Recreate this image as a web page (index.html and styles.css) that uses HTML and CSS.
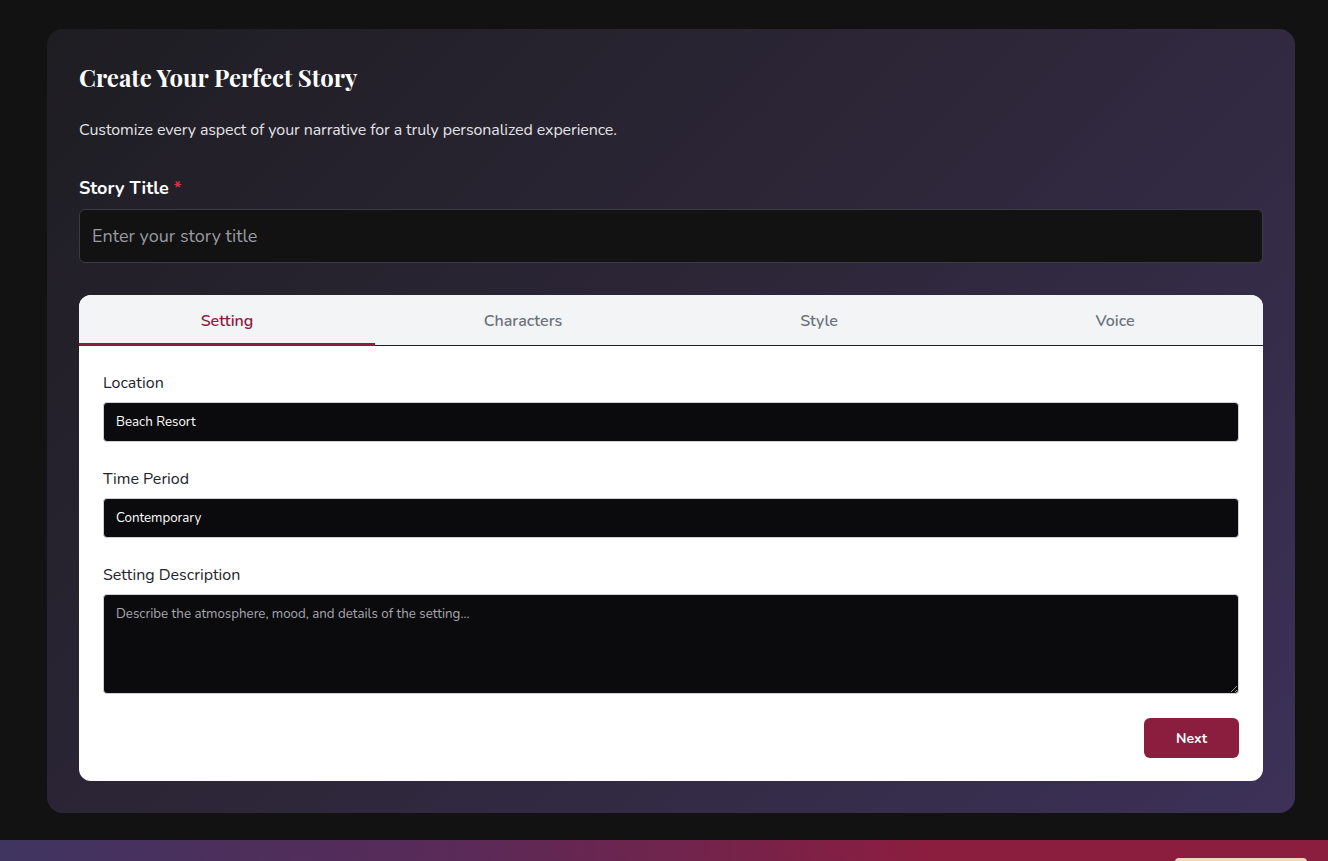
FILE: index.html
```html
<!DOCTYPE html>
<html lang="en">
<head>
<meta charset="utf-8">
<title>Create Your Perfect Story</title>
<link rel="stylesheet" href="styles.css">
</head>
<body>
<main class="page">
  <section class="panel">
    <h1 class="title">Create Your Perfect Story</h1>
    <p class="subtitle">Customize every aspect of your narrative for a truly personalized experience.</p>
    <label class="big-label" for="story-title">Story Title <span class="req">*</span></label>
    <input id="story-title" class="big-input" type="text" placeholder="Enter your story title">

    <div class="tabs-card">
      <div class="tabs">
        <div class="tab active">Setting</div>
        <div class="tab">Characters</div>
        <div class="tab">Style</div>
        <div class="tab">Voice</div>
      </div>
      <div class="tab-body">
        <div class="field">
          <label class="label" for="loc">Location</label>
          <input id="loc" class="input" type="text" value="Beach Resort">
        </div>
        <div class="field">
          <label class="label" for="time">Time Period</label>
          <input id="time" class="input" type="text" value="Contemporary">
        </div>
        <div class="field">
          <label class="label" for="desc">Setting Description</label>
          <textarea id="desc" class="textarea" placeholder="Describe the atmosphere, mood, and details of the setting..."></textarea>
        </div>
        <div class="actions">
          <button class="next" type="button">Next</button>
        </div>
      </div>
    </div>
  </section>
</main>
<footer class="strip">
  <div class="strip-btn"></div>
</footer>
</body>
</html>
```
FILE: styles.css
```css
* { box-sizing: border-box; }
html, body { margin: 0; padding: 0; }
body {
  background: #121212;
  font-family: "Nunito", "Open Sans", "Noto Sans", sans-serif;
  color: #fff;
  overflow: hidden;
  height: 861px;
}
.page {
  padding: 29px 33px 27px 47px;
}
.panel {
  width: 1248px;
  height: 784px;
  border-radius: 16px;
  background: linear-gradient(135deg, #1e1d22 0%, #2c2637 45%, #3d3158 100%);
  padding: 32px 32px;
  display: flex;
  flex-direction: column;
}
.title {
  margin: 0;
  font-family: "Playfair Display", "Liberation Serif", serif;
  font-weight: 700;
  font-size: 24px;
  line-height: 32px;
  color: #fff;
}
.subtitle {
  margin: 26px 0 0;
  font-size: 16px;
  letter-spacing: -0.1px;
  line-height: 22px;
  color: #e2e2e6;
}
.big-label {
  margin-top: 35px;
  font-size: 18px;
  font-weight: 700;
  line-height: 24px;
  color: #fff;
}
.req { color: #e0303f; }
.big-input {
  margin-top: 9px;
  height: 54px;
  width: 100%;
  background: #121212;
  border: 1px solid #3b3b48;
  border-radius: 6px;
  padding: 0 12px;
  font-family: inherit;
  font-size: 18px;
  color: #fff;
  outline: none;
}
.big-input::placeholder { color: #9a9aa2; }
.tabs-card {
  margin-top: 32px;
  background: #fff;
  border-radius: 12px;
  overflow: hidden;
  flex: 1;
  display: flex;
  flex-direction: column;
}
.tabs {
  display: grid;
  grid-template-columns: repeat(4, 1fr);
  background: #f3f4f6;
  border-bottom: 1px solid #1f1f24;
  height: 51px;
  flex: none;
}
.tab {
  display: flex;
  align-items: center;
  justify-content: center;
  font-size: 16px;
  font-weight: 600;
  color: #6b7280;
  padding-top: 2px;
}
.tab.active {
  color: #8b1d3f;
  border-bottom: 3px solid #8b1d3f;
  margin-bottom: -1px;
  padding-top: 3px;
}
.tab-body {
  padding: 27px 24px 24px;
  display: flex;
  flex-direction: column;
}
.field {
  display: flex;
  flex-direction: column;
  margin-bottom: 27px;
}
.label {
  font-size: 16px;
  line-height: 20px;
  color: #23232b;
  margin-bottom: 9px;
}
.input, .textarea {
  width: 100%;
  background: #0b0b0e;
  border: 1px solid #cfd0d6;
  border-radius: 4px;
  padding: 0 12px;
  font-family: inherit;
  font-size: 13.3px;
  color: #fff;
  outline: none;
}
.input { height: 40px; }
.textarea {
  height: 100px;
  padding: 10px 12px;
  resize: vertical;
  line-height: 18px;
}
.textarea::placeholder { color: #a7a7ad; }
.actions {
  display: flex;
  justify-content: flex-end;
  margin-top: -3px;
}
.next {
  width: 95px;
  height: 40px;
  border: none;
  border-radius: 6px;
  background: #8b1d3f;
  color: #fff;
  font-family: inherit;
  font-weight: 700;
  font-size: 14px;
}
.strip {
  height: 21px;
  background: linear-gradient(90deg, #3f3460 0%, #5a2a58 35%, #8b1d3f 70%, #8b1d3f 100%);
  position: relative;
}
.strip-btn {
  position: absolute;
  left: 1175px;
  top: 18px;
  width: 132px;
  height: 10px;
  border-radius: 4px;
  background: #f5d5b8;
}
```
